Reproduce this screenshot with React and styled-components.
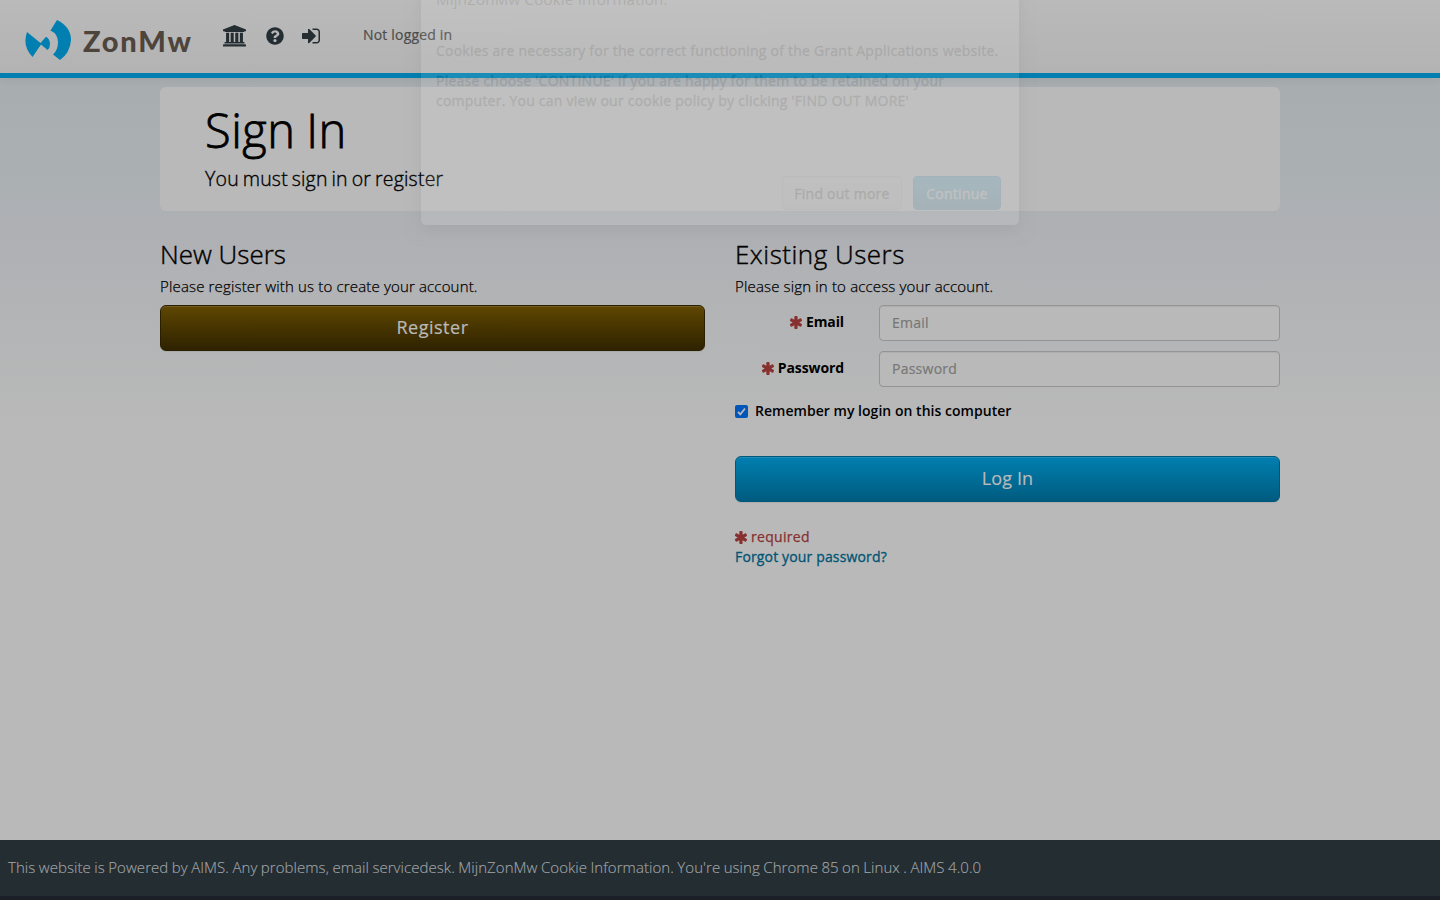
import React from 'react';
import styled, { createGlobalStyle, css } from 'styled-components';
import { FaQuestionCircle } from 'react-icons/fa';

const Global = createGlobalStyle`
  * { box-sizing: border-box; }
  body { margin: 0; background: #b9b9b9; }
  h1, h2, p { margin: 0; font-weight: 300; }
`;

const Page = styled.div`
  position: relative;
  height: 900px;
  overflow: hidden;
  display: flex;
  flex-direction: column;
  color: #000;
  font: 400 14px/20px "Open Sans", "Noto Sans", sans-serif;
  background: linear-gradient(#a8adb0 78px, #abb0b3 190px, #afb0b4 230px, #b4b5b6 340px, #b9b9b9 430px);
`;

const Header = styled.header`
  flex: none;
  height: 78px;
  display: flex;
  align-items: flex-start;
  padding-left: 24px;
  border-bottom: 5px solid #007fb0;
  background: linear-gradient(#bababa, #b3b3b3);
  box-shadow: 0 1px 10px rgba(0, 0, 0, 0.07);
`;

const Logo = styled.div`
  display: flex;
  width: 170px;
  height: 42px;
  margin-top: 19px;
`;

const Mark = styled.svg`
  width: 48px;
  height: 42px;
`;

const Wordmark = styled.span`
  margin-left: 11px;
  font: 900 29px/43px Lato, sans-serif;
  letter-spacing: 1.8px;
  color: #4d443c;
`;

const Nav = styled.nav`
  display: flex;
  color: #232d32;
  margin: 25px 0 0 29px;
`;

const NavIcon = styled.span`
  display: flex;
  width: ${(p) => p.$w}px;
  margin-right: ${(p) => p.$gap}px;
  height: 22px;
  align-items: center;
  svg { display: block; fill: currentColor; }
`;

const Status = styled.span`
  color: #4d4d4d;
  margin: 25px 0 0 43px;
  letter-spacing: 0.18px;
  -webkit-text-stroke: 0.2px;
`;

const Main = styled.main`
  flex: 1;
  width: 1120px;
  margin: 9px auto 0;
`;

const Hero = styled.section`
  height: 124px;
  border-radius: 6px;
  background: #b9b9b9;
  padding: 16px 45px 0;
`;

const Title = styled.h1`
  font-size: 47px;
  line-height: 54px;
  letter-spacing: 0.5px;
  word-spacing: -2px;
  -webkit-text-stroke: 0.8px;
`;

const Lead = styled.p`
  font-size: 19.5px;
  line-height: 28px;
  margin-top: 8px;
  letter-spacing: 0.22px;
  word-spacing: -1.5px;
  white-space: nowrap;
  -webkit-text-stroke: 0.35px;
`;

const Columns = styled.div`
  display: grid;
  grid-template-columns: 1fr 1fr;
  gap: 30px;
  margin-top: 27px;
`;

const Heading = styled.h2`
  font-size: 26px;
  line-height: 33px;
  letter-spacing: ${(p) => p.$ls}px;
  -webkit-text-stroke: 0.4px;
`;

const Intro = styled.p`
  font-size: 15px;
  line-height: 21px;
  margin: 5px 0 8px;
  letter-spacing: 0.16px;
  -webkit-text-stroke: 0.25px;
`;

const BigButton = styled.button`
  display: block;
  width: 100%;
  height: 46px;
  padding: 0 0 2px;
  border-radius: 6px;
  border: 1px solid;
  font: 400 18px/24px "Open Sans", sans-serif;
  letter-spacing: ${(p) => (p.$primary ? 0.1 : 0.5)}px;
  -webkit-text-stroke: 0.2px;
  color: #b9b9b9;
  box-shadow: inset 0 1px 0 rgba(255, 255, 255, 0.12), 0 1px 1px rgba(0, 0, 0, 0.07);
  ${(p) => p.$primary
    ? css`background: linear-gradient(#007fb0, #005b7f); border-color: #00577a;`
    : css`background: linear-gradient(#5f4700, #2e2200); border-color: #2a1f00;`}
`;

const Field = styled.div`
  display: grid;
  grid-template-columns: 109px 401px;
  justify-content: space-between;
  height: 36px;
  margin-bottom: 10px;
`;

const Label = styled.label`
  display: flex;
  justify-content: flex-end;
  align-items: center;
  height: 34px;
  font-weight: 700;
  gap: 3px;
  letter-spacing: -0.1px;
`;

const StarSvg = styled.svg`
  width: 13px;
  height: 13px;
  fill: #86302f;
`;

const Input = styled.input`
  width: 100%;
  height: 36px;
  padding: 0 12px 2px;
  border: 1px solid #949494;
  border-radius: 4px;
  background: #b9b9b9;
  font: 400 14px "Open Sans", sans-serif;
  letter-spacing: 0.25px;
  box-shadow: inset 0 1px 1px rgba(0, 0, 0, 0.06);
  &::placeholder { color: #777; -webkit-text-stroke: 0.2px; }
`;

const Remember = styled.label`
  display: flex;
  align-items: center;
  height: 20px;
  margin: 14px 0 35px;
  font-weight: 600;
  letter-spacing: 0.03px;
`;

const Check = styled.span`
  width: 13px;
  height: 13px;
  border-radius: 2px;
  background: #0057b9;
  margin-right: 7px;
  svg { display: block; }
`;

const Required = styled.div`
  display: flex;
  align-items: center;
  gap: 3px;
  margin-top: 25px;
  color: #86302f;
  letter-spacing: 0.3px;
  -webkit-text-stroke: 0.25px;
`;

const Forgot = styled.a`
  color: #005475;
  letter-spacing: 0.15px;
  -webkit-text-stroke: 0.3px;
`;

const Footer = styled.footer`
  flex: none;
  height: 60px;
  border-bottom: 4px solid #1b2028;
  background: #232d32;
  color: #a0a3a5;
  padding: 17px 8px 0;
  font-size: 15px;
  font-weight: 300;
  letter-spacing: 0.06px;
  word-spacing: -0.5px;
  -webkit-text-stroke: 0.15px;
`;

const Dialog = styled.div`
  position: absolute;
  left: 421px;
  top: -14px;
  width: 598px;
  height: 239px;
  padding: 3px 15px;
  border-radius: 5px;
  background: #fff;
  opacity: 0.1;
  color: #4a4a4a;
  box-shadow: 0 5px 15px rgba(0, 0, 0, 0.5);
`;

const DialogTitle = styled.p`
  font-size: 15px;
  font-weight: 400;
  letter-spacing: 0.24px;
  margin-bottom: 32px;
`;

const Notice = styled.p`
  font-weight: 400;
  white-space: nowrap;
  letter-spacing: 0.23px;
  margin-bottom: 10px;
  -webkit-text-stroke: 0.35px;
`;

const Actions = styled.div`
  display: flex;
  gap: 11px;
  justify-content: flex-end;
  padding-right: 3px;
  margin-top: 65px;
`;

const SmallButton = styled.span`
  width: ${(p) => p.$w}px;
  height: 34px;
  border-radius: 4px;
  line-height: 33px;
  text-align: center;
  white-space: nowrap;
  letter-spacing: 0.25px;
  -webkit-text-stroke: 0.35px;
  border: 1px solid ${(p) => (p.$primary ? '#0086b8' : '#ccc')};
  background: ${(p) => (p.$primary ? 'linear-gradient(#00aeef, #007fb0)' : 'linear-gradient(#fff, #eee)')};
  color: ${(p) => (p.$primary ? '#fff' : '#333')};
`;

const Star = () => (
  <StarSvg viewBox="194 128 1404 1536">
    <path d="M1482 1050q46 26 59.500 77.500t-12.500 97.500l-64 110q-26 46-77.500 59.500t-97.500-12.500l-266-153v307q0 52-38 90t-90 38h-128q-52 0-90-38t-38-90v-307l-266 153q-46 26-97.500 12.500t-77.500-59.500l-64-110q-26-46-12.500-97.500t59.500-77.500l266-154-266-154q-46-26-59.500-77.500t12.500-97.500l64-110q26-46 77.500-59.500t97.500 12.500l266 153v-307q0-52 38-90t90-38h128q52 0 90 38t38 90v307l266-153q46-26 97.500-12.500t77.500 59.500l64 110q26 46 12.500 97.500t-59.500 77.500l-266 154z" />
  </StarSvg>
);

const Bank = () => (
  <svg width="23" height="21.500" viewBox="-128 0 1920 1792">
    <path d="M832 0l960 384v128h-128q0 26-20.500 45t-48.500 19h-1526q-28 0-48.500-19t-20.500-45h-128v-128zM128 640h256v768h128v-768h256v768h128v-768h256v768h128v-768h256v768h59q28 0 48.500 19t20.500 45v64h-1664v-64q0-26 20.500-45t48.500-19h59zM1723 1600q28 0 48.500 19t20.500 45v128h-1920v-128q0-26 20.500-45t48.500-19z" />
  </svg>
);

const SignIn = () => (
  <svg width="19" height="16" viewBox="0 256 1536 1280">
    <path d="M1184 896q0 26-19 45l-544 544q-19 19-45 19t-45-19-19-45v-288h-448q-26 0-45-19t-19-45v-384q0-26 19-45t45-19h448v-288q0-26 19-45t45-19 45 19l544 544q19 19 19 45zm352-352v704q0 119-84.500 203.500t-203.500 84.500h-320q-13 0-22.500-9.500t-9.500-22.500q0-4-1-20t-.5-26.500 3-23.500 10-19.500 20.500-6.500h320q66 0 113-47t47-113v-704q0-66-47-113t-113-47h-312l-11.500-1-11.500-3-8-5.500-7-9-2-13.500q0-4-1-20t-.5-26.500 3-23.500 10-19.500 20.500-6.500h320q119 0 203.500 84.500t84.500 203.500z" />
  </svg>
);

export default function App() {
  return (
    <Page>
      <Global />
      <Header>
        <Logo>
          <Mark viewBox="0 0 48 42">
            <path fill="#007fb0" d="M3 13L16.500 24L22 17.800Q26 20 26 25Q26 29 23.500 31L17 25.500L8.500 38Q-2 27 3 13ZM33 1Q47 8 47 21Q46 34 36 41L29 35.500Q34 31 34 23Q34 15 26.500 11.500Z" />
          </Mark>
          <Wordmark>ZonMw</Wordmark>
        </Logo>
        <Nav>
          <NavIcon $w={23} $gap={20}><Bank /></NavIcon>
          <NavIcon $w={18} $gap={18}><FaQuestionCircle size={18} /></NavIcon>
          <NavIcon $w={18} $gap={0}><SignIn /></NavIcon>
        </Nav>
        <Status>Not logged in</Status>
      </Header>
      <Main>
        <Hero>
          <Title>Sign In</Title>
          <Lead>You must sign in or register</Lead>
        </Hero>
        <Columns>
          <section>
            <Heading $ls={0}>New Users</Heading>
            <Intro>Please register with us to create your account.</Intro>
            <BigButton>Register</BigButton>
          </section>
          <section>
            <Heading $ls={0.5}>Existing Users</Heading>
            <Intro>Please sign in to access your account.</Intro>
            <Field><Label><Star /> Email</Label><Input placeholder="Email" /></Field>
            <Field><Label><Star /> Password</Label><Input placeholder="Password" /></Field>
            <Remember>
              <Check><svg viewBox="0 0 13 13"><path d="M3 6.800L5.300 9.300L10 3.500" fill="none" stroke="#b9b9b9" strokeWidth="1.800" /></svg></Check>
              Remember my login on this computer
            </Remember>
            <BigButton $primary>Log In</BigButton>
            <Required><Star /> required</Required>
            <Forgot>Forgot your password?</Forgot>
          </section>
        </Columns>
      </Main>
      <Footer>This website is Powered by AIMS. Any problems, email servicedesk. MijnZonMw Cookie Information. You're using Chrome 85 on Linux . AIMS 4.0.0</Footer>
      <Dialog>
        <DialogTitle>MijnZonMw Cookie Information.</DialogTitle>
        <Notice>Cookies are necessary for the correct functioning of the Grant Applications website.</Notice>
        <Notice>Please choose 'CONTINUE' if you are happy for them to be retained on your<br />computer. You can view our cookie policy by clicking 'FIND OUT MORE'</Notice>
        <Actions><SmallButton $w={120}>Find out more</SmallButton><SmallButton $w={88} $primary>Continue</SmallButton></Actions>
      </Dialog>
    </Page>
  );
}
